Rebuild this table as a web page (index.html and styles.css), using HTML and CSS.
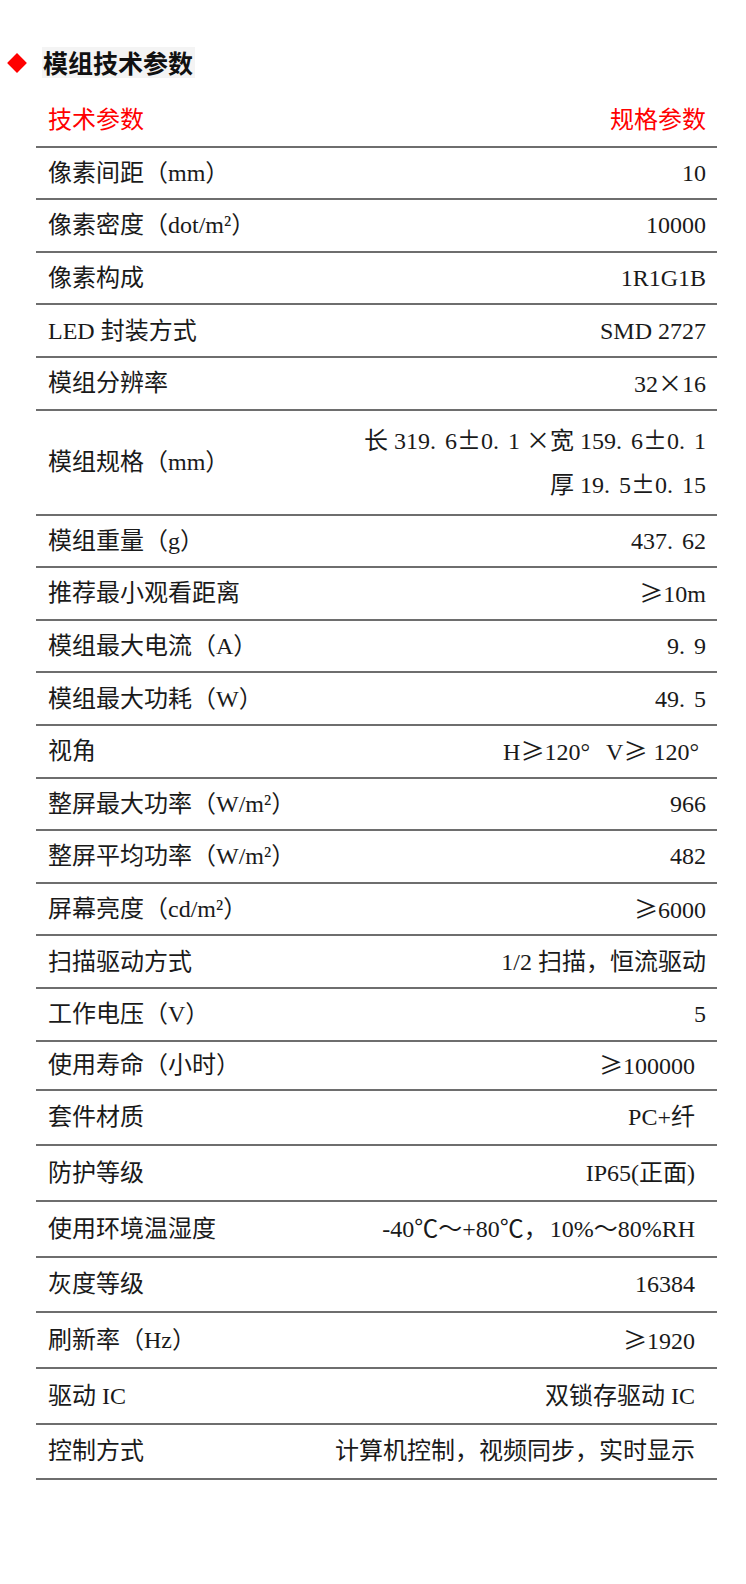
FILE: index.html
```html
<!DOCTYPE html>
<html lang="zh-CN">
<head>
<meta charset="utf-8">
<title>模组技术参数</title>
<link rel="stylesheet" href="styles.css">
</head>
<body>
<div class="section-title">
  <span class="diamond-box"><span class="diamond"></span></span>
  <span class="title-text">模组技术参数</span>
</div>
<div class="spec-table">
  <div class="row head"><span>技术参数</span><span>规格参数</span></div>
  <div class="row"><span>像素间距（mm）</span><span>10</span></div>
  <div class="row"><span>像素密度（dot/m²）</span><span>10000</span></div>
  <div class="row"><span>像素构成</span><span>1R1G1B</span></div>
  <div class="row"><span>LED 封装方式</span><span>SMD 2727</span></div>
  <div class="row"><span>模组分辨率</span><span>32<span class="fw">×</span>16</span></div>
  <div class="row tall"><span>模组规格（mm）</span><span class="multi"><span>长 319<span class="pd">.</span>6<span class="fw">±</span>0<span class="pd">.</span>1 <span class="fw">×</span>宽 159<span class="pd">.</span>6<span class="fw">±</span>0<span class="pd">.</span>1</span><span>厚 19<span class="pd">.</span>5<span class="fw">±</span>0<span class="pd">.</span>15</span></span></div>
  <div class="row"><span>模组重量（g）</span><span>437<span class="pd">.</span>62</span></div>
  <div class="row"><span>推荐最小观看距离</span><span><span class="fw">≥</span>10m</span></div>
  <div class="row"><span>模组最大电流（A）</span><span>9<span class="pd">.</span>9</span></div>
  <div class="row"><span>模组最大功耗（W）</span><span>49<span class="pd">.</span>5</span></div>
  <div class="row deg-row"><span>视角</span><span>H<span class="fw">≥</span>120°<span class="gap"></span>V<span class="fw">≥</span> 120°</span></div>
  <div class="row"><span>整屏最大功率（W/m²）</span><span>966</span></div>
  <div class="row"><span>整屏平均功率（W/m²）</span><span>482</span></div>
  <div class="row"><span>屏幕亮度（cd/m²）</span><span><span class="fw">≥</span>6000</span></div>
  <div class="row"><span>扫描驱动方式</span><span>1/2 扫描，恒流驱动</span></div>
  <div class="row"><span>工作电压（V）</span><span>5</span></div>
  <div class="row g2 short"><span>使用寿命（小时）</span><span><span class="fw">≥</span>100000</span></div>
  <div class="row g2"><span>套件材质</span><span>PC+纤</span></div>
  <div class="row g2"><span>防护等级</span><span>IP65(正面)</span></div>
  <div class="row g2"><span>使用环境温湿度</span><span>-40℃～+80℃，<span class="gap-s"></span>10%～80%RH</span></div>
  <div class="row g2"><span>灰度等级</span><span>16384</span></div>
  <div class="row g2"><span>刷新率（Hz）</span><span><span class="fw">≥</span>1920</span></div>
  <div class="row g2"><span>驱动 IC</span><span>双锁存驱动 IC</span></div>
  <div class="row g2"><span>控制方式</span><span>计算机控制，视频同步，实时显示</span></div>
</div>
</body>
</html>
```
FILE: styles.css
```css
html, body {
  margin: 0;
  padding: 0;
  background: #ffffff;
}
body {
  width: 746px;
  font-family: "Liberation Serif", "Noto Sans CJK SC", serif;
  color: #1a1a1a;
}
.section-title {
  display: flex;
  align-items: center;
  margin: 47px 0 0 7px;
  height: 31px;
}
.diamond-box {
  width: 20px;
  height: 20px;
  display: flex;
  align-items: center;
  justify-content: center;
  margin-right: 15px;
}
.diamond {
  width: 14px;
  height: 14px;
  background: #ff0000;
  transform: rotate(45deg);
}
.title-text {
  font-family: "Noto Sans CJK SC", sans-serif;
  font-weight: 700;
  font-size: 25px;
  line-height: 31px;
  height: 31px;
  padding: 0 2px 0 1px;
  background: #f4f4f4;
  color: #111111;
}
.spec-table {
  margin: 17px 0 0 36px;
  width: 681px;
}
.row {
  display: flex;
  justify-content: space-between;
  align-items: center;
  box-sizing: border-box;
  height: 52.6px;
  padding: 0 11px 0 12px;
  border-bottom: 2px solid #6e6e6e;
  font-size: 24px;
  line-height: 30px;
  white-space: nowrap;
}
.row.head {
  color: #ff0000;
}
.row.tall {
  height: 105px;
}
.row.deg-row {
  padding-right: 18px;
}
.row.g2 {
  height: 55.7px;
  padding-right: 22px;
}
.row.g2.short {
  height: 49px;
}
.multi {
  display: flex;
  flex-direction: column;
  align-items: flex-end;
  line-height: 42px;
}
.fw {
  font-family: "Noto Sans CJK SC", sans-serif;
  font-feature-settings: "fwid" 1;
}
.pd {
  padding-right: 9px;
}
.gap {
  display: inline-block;
  width: 16px;
}
.gap-s {
  display: inline-block;
  width: 2px;
}
```
